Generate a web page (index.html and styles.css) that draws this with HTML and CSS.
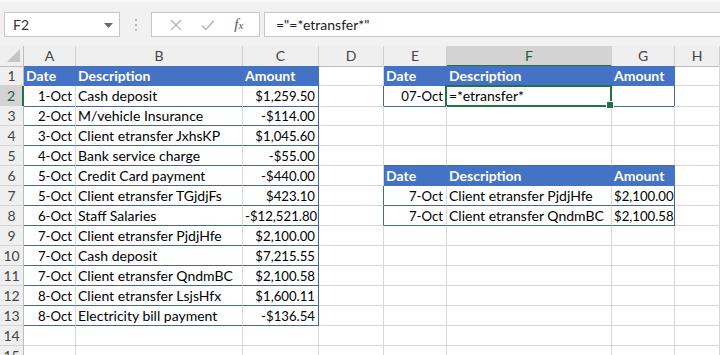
FILE: index.html
```html
<!DOCTYPE html>
<html lang="en">
<head>
  <meta charset="UTF-8">
  <title>Book1 - Excel</title>
  <link rel="stylesheet" href="styles.css">
</head>
<body>

<div class="toolbar">
  <div class="namebox">
    <span>F2</span>
    <svg class="drop" width="9" height="5" viewBox="0 0 9 5"><path d="M0 0h9L4.5 5z" fill="#6a6a6a"/></svg>
  </div>
  <div class="grip"><i></i><i></i><i></i></div>
  <div class="fxbox">
    <svg width="12" height="12" viewBox="0 0 12 12"><path d="M1 1l10 10M11 1L1 11" stroke="#b4b4b4" stroke-width="1.3" fill="none"/></svg>
    <svg width="14" height="12" viewBox="0 0 14 12"><path d="M1 6.5l4 4L13 1.5" stroke="#b4b4b4" stroke-width="1.4" fill="none"/></svg>
    <span class="fx">f<small>x</small></span>
  </div>
  <div class="formula">="=*etransfer*"</div>
</div>

<div class="sheet">
  <div class="row colhead">
    <div class="corner"><svg width="16" height="16" viewBox="0 0 16 16"><path d="M2 14H15V1z" fill="#c4c4c4"/></svg></div>
    <div>A</div><div>B</div><div>C</div><div>D</div><div>E</div><div class="sel">F</div><div>G</div><div>H</div>
  </div>

  <div class="row">
    <div class="rh">1</div>
    <div class="c th">Date</div><div class="c th">Description</div><div class="c th">Amount</div>
    <div class="c"></div>
    <div class="c th">Date</div><div class="c th">Description</div><div class="c th">Amount</div>
    <div class="c"></div>
  </div>
  <div class="row">
    <div class="rh sel">2</div>
    <div class="c num tb">1-Oct</div><div class="c tb">Cash deposit</div><div class="c num tb tr">$1,259.50</div>
    <div class="c tr"></div>
    <div class="c num tb">07-Oct</div><div class="c tb active">=*etransfer*</div><div class="c tb tr"></div>
    <div class="c"></div>
  </div>
  <div class="row">
    <div class="rh">3</div>
    <div class="c num tb">2-Oct</div><div class="c tb">M/vehicle Insurance</div><div class="c num tb tr">-$114.00</div>
    <div class="c"></div><div class="c"></div><div class="c"></div><div class="c"></div><div class="c"></div>
  </div>
  <div class="row">
    <div class="rh">4</div>
    <div class="c num tb">3-Oct</div><div class="c tb">Client etransfer JxhsKP</div><div class="c num tb tr">$1,045.60</div>
    <div class="c"></div><div class="c"></div><div class="c"></div><div class="c"></div><div class="c"></div>
  </div>
  <div class="row">
    <div class="rh">5</div>
    <div class="c num tb">4-Oct</div><div class="c tb">Bank service charge</div><div class="c num tb tr">-$55.00</div>
    <div class="c"></div><div class="c tb"></div><div class="c tb"></div><div class="c tb"></div><div class="c"></div>
  </div>
  <div class="row">
    <div class="rh">6</div>
    <div class="c num tb">5-Oct</div><div class="c tb">Credit Card payment</div><div class="c num tb tr">-$440.00</div>
    <div class="c"></div>
    <div class="c th">Date</div><div class="c th">Description</div><div class="c th">Amount</div>
    <div class="c"></div>
  </div>
  <div class="row">
    <div class="rh">7</div>
    <div class="c num tb">5-Oct</div><div class="c tb">Client etransfer TGjdjFs</div><div class="c num tb tr">$423.10</div>
    <div class="c tr"></div>
    <div class="c num tb">7-Oct</div><div class="c tb">Client etransfer PjdjHfe</div><div class="c num tb tr">$2,100.00</div>
    <div class="c"></div>
  </div>
  <div class="row">
    <div class="rh">8</div>
    <div class="c num tb">6-Oct</div><div class="c tb">Staff Salaries</div><div class="c num tb tr">-$12,521.80</div>
    <div class="c tr"></div>
    <div class="c num tb">7-Oct</div><div class="c tb">Client etransfer QndmBC</div><div class="c num tb tr">$2,100.58</div>
    <div class="c"></div>
  </div>
  <div class="row">
    <div class="rh">9</div>
    <div class="c num tb">7-Oct</div><div class="c tb">Client etransfer PjdjHfe</div><div class="c num tb tr">$2,100.00</div>
    <div class="c"></div><div class="c"></div><div class="c"></div><div class="c"></div><div class="c"></div>
  </div>
  <div class="row">
    <div class="rh">10</div>
    <div class="c num tb">7-Oct</div><div class="c tb">Cash deposit</div><div class="c num tb tr">$7,215.55</div>
    <div class="c"></div><div class="c"></div><div class="c"></div><div class="c"></div><div class="c"></div>
  </div>
  <div class="row">
    <div class="rh">11</div>
    <div class="c num tb">7-Oct</div><div class="c tb">Client etransfer QndmBC</div><div class="c num tb tr">$2,100.58</div>
    <div class="c"></div><div class="c"></div><div class="c"></div><div class="c"></div><div class="c"></div>
  </div>
  <div class="row">
    <div class="rh">12</div>
    <div class="c num tb">8-Oct</div><div class="c tb">Client etransfer LsjsHfx</div><div class="c num tb tr">$1,600.11</div>
    <div class="c"></div><div class="c"></div><div class="c"></div><div class="c"></div><div class="c"></div>
  </div>
  <div class="row">
    <div class="rh">13</div>
    <div class="c num tb">8-Oct</div><div class="c tb">Electricity bill payment</div><div class="c num tb tr">-$136.54</div>
    <div class="c"></div><div class="c"></div><div class="c"></div><div class="c"></div><div class="c"></div>
  </div>
  <div class="row">
    <div class="rh">14</div>
    <div class="c"></div><div class="c"></div><div class="c"></div><div class="c"></div><div class="c"></div><div class="c"></div><div class="c"></div><div class="c"></div>
  </div>
  <div class="row">
    <div class="rh">15</div>
    <div class="c"></div><div class="c"></div><div class="c"></div><div class="c"></div><div class="c"></div><div class="c"></div><div class="c"></div><div class="c"></div>
  </div>
</div>

</body>
</html>
```

FILE: styles.css
```css
* { box-sizing:border-box; }
body { margin:0; font-family: Lato, "Liberation Sans", sans-serif; font-size:14px; color:#000; background:#fff; overflow:hidden; }

/* formula bar */
.toolbar { display:flex; align-items:flex-start; height:46px; padding:10px 0 0 4px; background:#f1f1f1; border-top:2px solid #f7f7f7; }
.namebox { width:116px; height:25px; display:flex; align-items:center; justify-content:space-between; padding:0 6px 0 8px; background:#fff; border:1px solid #c6c6c6; color:#333; }
.drop { margin-top:1px; }
.grip { width:31px; height:25px; display:flex; flex-direction:column; align-items:center; justify-content:center; gap:3px; }
.grip i { width:2px; height:2px; background:#b8b8b8; }
.fxbox { width:109px; height:25px; display:flex; align-items:center; justify-content:space-around; padding:0 6px 0 8px; background:#fff; border:1px solid #c6c6c6; }
.fx { font-family:"Liberation Serif", serif; font-style:italic; font-size:15px; color:#555; }
.fx small { font-size:11px; }
.formula { flex:1; height:25px; margin:0 -2px 0 4px; padding:3px 11px; background:#fff; border:1px solid #c6c6c6; color:#222; white-space:nowrap; }

/* grid */
.sheet { background:#fff; }
.row { display:grid; grid-template-columns:24px 52px 167px 76px 65px 63px 165px 63px 1fr; height:20px; }
.colhead { background:#efefef; color:#444; }
.colhead div { text-align:center; line-height:19px; border-right:1px solid #d0d0d0; border-bottom:1px solid #bdbdbd; }
.colhead .corner { position:relative; border-right:1px solid #bdbdbd; }
.corner svg { position:absolute; right:2px; bottom:2px; }
.colhead .sel { background:#d3d3d3; color:#1e5e3c; border-bottom:2px solid #217346; }
.rh { background:#efefef; color:#444; text-align:center; line-height:19px; border-right:1px solid #bdbdbd; border-bottom:1px solid #d4d4d4; }
.rh.sel { background:#d3d3d3; color:#1e5e3c; border-right:2px solid #217346; }
.c { position:relative; padding:0 2px 0 2px; line-height:20px; white-space:nowrap; overflow:hidden; border-right:1px solid #d9d9d9; border-bottom:1px solid #d9d9d9; }
.num { text-align:right; padding-right:3px; font-size:13.2px; }
.th { background:#4472c4; color:#fff; font-weight:bold; border-color:#4472c4; }
.tb { border-bottom-color:#44679f; }
.tr { border-right-color:#44679f; }

/* active cell */
.active { overflow:visible; }
.active::after { content:""; position:absolute; top:-1px; left:-2px; right:-1px; bottom:-1px; border:2px solid #217346; }
.active::before { content:""; position:absolute; right:-3px; bottom:-3px; width:6px; height:6px; background:#217346; border:1px solid #fff; z-index:1; }
```
